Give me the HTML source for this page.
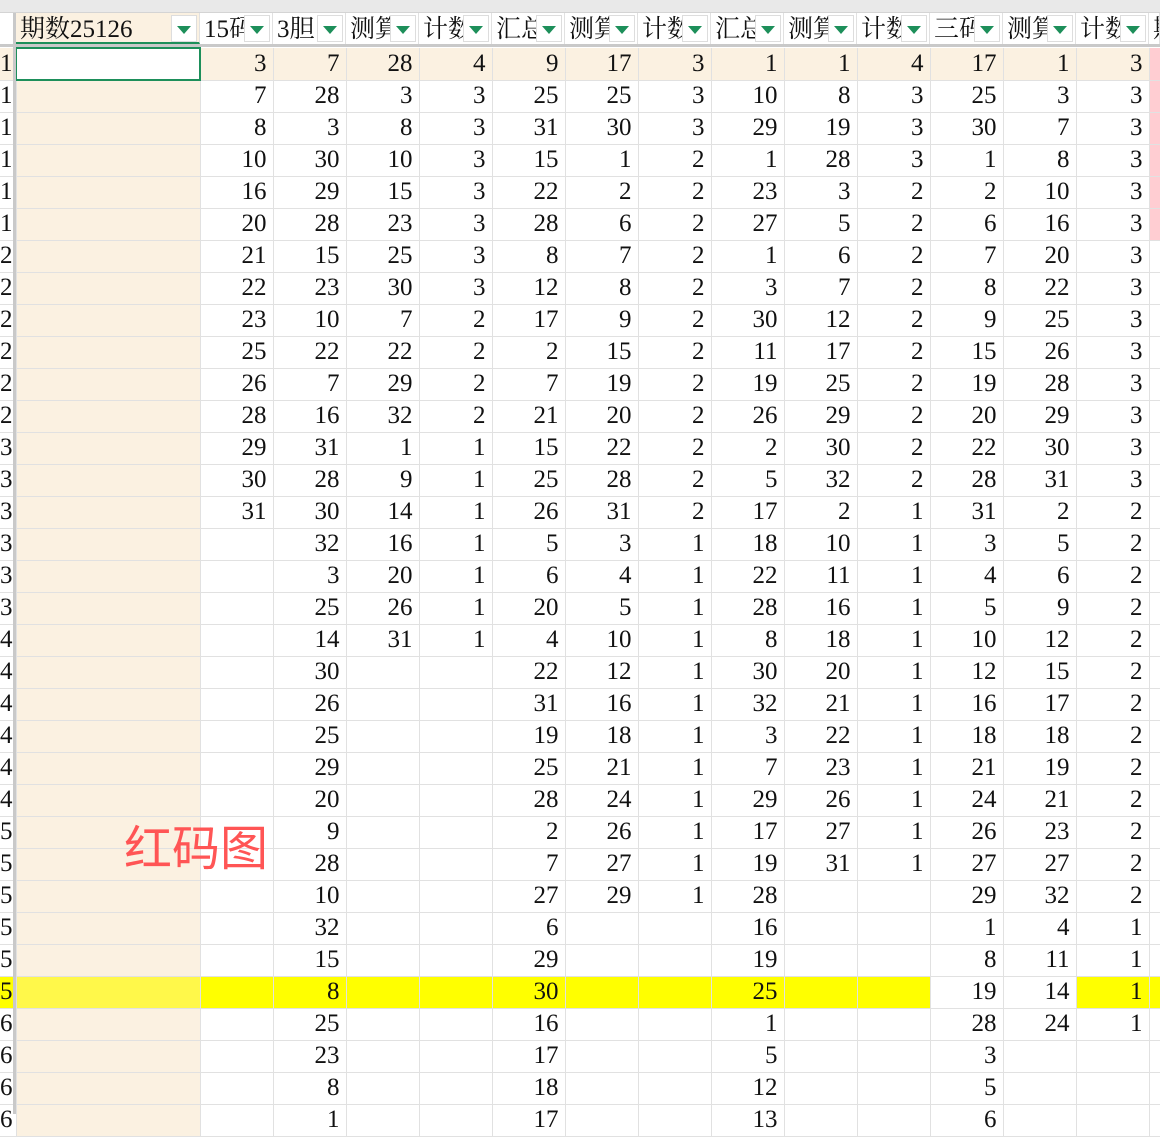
<!DOCTYPE html>
<html><head><meta charset="utf-8"><style>
*{margin:0;padding:0;box-sizing:border-box}
body{width:1160px;height:1114px;overflow:hidden;background:#fff;position:relative;font-family:"Liberation Serif","Noto Serif CJK SC",serif;font-size:24px;color:#111}
#hdr{position:absolute;left:0;top:0;width:1160px;height:13px;background:#e9e9e9;border-bottom:1px solid #d4d4d4}
#flt{position:absolute;left:0;top:13px;height:31px;width:1160px;display:flex;background:#fff}
#flt div{height:31px;border-right:1px solid #e1e1e1;position:relative;overflow:hidden;white-space:nowrap;padding-left:4px;line-height:34px;font-family:"Liberation Serif","Noto Serif CJK SC",serif;font-size:25px}
#flt div i{position:absolute;right:2px;top:2px;width:26px;height:27px;background:#fff;border:1px solid #ddd}
#flt div i:after{content:"";position:absolute;left:5px;top:10px;border-left:7px solid transparent;border-right:7px solid transparent;border-top:8px solid #1d8f5a}
#bar{position:absolute;left:0;top:44px;width:1160px;height:3px;background:#c9c9c9}
#vbar{position:absolute;left:13px;top:13px;width:3px;height:1101px;background:#c9c9c9;z-index:3}
table{position:absolute;left:0;top:47px;border-collapse:collapse;table-layout:fixed;width:1160px}
td{height:32px;border-right:1px solid #e1e1e1;border-bottom:1px solid #e1e1e1;text-align:right;padding-right:6px;overflow:hidden;white-space:nowrap;line-height:30px;font-size:25px}
td:first-child{padding-right:5px}
td:nth-child(2){background:#fbf1e1}
tr.f td{background:#fbf1e1}
tr.f td:nth-child(2){background:#fff;border:2px solid #1d8f5a}
tr.y td{background:#ffff00}
tr.y td:nth-child(2){background:#fff84a}
tr.y td:nth-child(13),tr.y td:nth-child(14){background:#fff}
tr.p td:nth-child(16){background:#ffcdd2}
#red{position:absolute;left:124px;top:814px;font-family:"Noto Sans CJK SC",sans-serif;font-size:48px;color:#ff5555;line-height:60px;z-index:4}
</style></head><body>
<div id="hdr"></div>
<div id="flt">
<div style="width:16px"></div>
<div style="width:184px;background:#fbf1e1;border-bottom:2px solid #1d8f5a">期数25126<i></i></div>
<div style="width:73px">15码<i></i></div>
<div style="width:73px">3胆<i></i></div>
<div style="width:73px">测算<i></i></div>
<div style="width:73px">计数<i></i></div>
<div style="width:73px">汇总<i></i></div>
<div style="width:73px">测算<i></i></div>
<div style="width:73px">计数<i></i></div>
<div style="width:73px">汇总<i></i></div>
<div style="width:73px">测算<i></i></div>
<div style="width:73px">计数<i></i></div>
<div style="width:73px">三码<i></i></div>
<div style="width:73px">测算<i></i></div>
<div style="width:73px">计数<i></i></div>
<div style="width:11px">期</div>
</div>
<div id="bar"></div>
<div id="vbar"></div>
<table>
<colgroup><col style="width:16px"><col style="width:184px"><col span="13" style="width:73px"><col style="width:11px"></colgroup>
<tr class="f p"><td>1</td><td></td><td>3</td><td>7</td><td>28</td><td>4</td><td>9</td><td>17</td><td>3</td><td>1</td><td>1</td><td>4</td><td>17</td><td>1</td><td>3</td><td></td></tr>
<tr class="p"><td>1</td><td></td><td>7</td><td>28</td><td>3</td><td>3</td><td>25</td><td>25</td><td>3</td><td>10</td><td>8</td><td>3</td><td>25</td><td>3</td><td>3</td><td></td></tr>
<tr class="p"><td>1</td><td></td><td>8</td><td>3</td><td>8</td><td>3</td><td>31</td><td>30</td><td>3</td><td>29</td><td>19</td><td>3</td><td>30</td><td>7</td><td>3</td><td></td></tr>
<tr class="p"><td>1</td><td></td><td>10</td><td>30</td><td>10</td><td>3</td><td>15</td><td>1</td><td>2</td><td>1</td><td>28</td><td>3</td><td>1</td><td>8</td><td>3</td><td></td></tr>
<tr class="p"><td>1</td><td></td><td>16</td><td>29</td><td>15</td><td>3</td><td>22</td><td>2</td><td>2</td><td>23</td><td>3</td><td>2</td><td>2</td><td>10</td><td>3</td><td></td></tr>
<tr class="p"><td>1</td><td></td><td>20</td><td>28</td><td>23</td><td>3</td><td>28</td><td>6</td><td>2</td><td>27</td><td>5</td><td>2</td><td>6</td><td>16</td><td>3</td><td></td></tr>
<tr><td>2</td><td></td><td>21</td><td>15</td><td>25</td><td>3</td><td>8</td><td>7</td><td>2</td><td>1</td><td>6</td><td>2</td><td>7</td><td>20</td><td>3</td><td></td></tr>
<tr><td>2</td><td></td><td>22</td><td>23</td><td>30</td><td>3</td><td>12</td><td>8</td><td>2</td><td>3</td><td>7</td><td>2</td><td>8</td><td>22</td><td>3</td><td></td></tr>
<tr><td>2</td><td></td><td>23</td><td>10</td><td>7</td><td>2</td><td>17</td><td>9</td><td>2</td><td>30</td><td>12</td><td>2</td><td>9</td><td>25</td><td>3</td><td></td></tr>
<tr><td>2</td><td></td><td>25</td><td>22</td><td>22</td><td>2</td><td>2</td><td>15</td><td>2</td><td>11</td><td>17</td><td>2</td><td>15</td><td>26</td><td>3</td><td></td></tr>
<tr><td>2</td><td></td><td>26</td><td>7</td><td>29</td><td>2</td><td>7</td><td>19</td><td>2</td><td>19</td><td>25</td><td>2</td><td>19</td><td>28</td><td>3</td><td></td></tr>
<tr><td>2</td><td></td><td>28</td><td>16</td><td>32</td><td>2</td><td>21</td><td>20</td><td>2</td><td>26</td><td>29</td><td>2</td><td>20</td><td>29</td><td>3</td><td></td></tr>
<tr><td>3</td><td></td><td>29</td><td>31</td><td>1</td><td>1</td><td>15</td><td>22</td><td>2</td><td>2</td><td>30</td><td>2</td><td>22</td><td>30</td><td>3</td><td></td></tr>
<tr><td>3</td><td></td><td>30</td><td>28</td><td>9</td><td>1</td><td>25</td><td>28</td><td>2</td><td>5</td><td>32</td><td>2</td><td>28</td><td>31</td><td>3</td><td></td></tr>
<tr><td>3</td><td></td><td>31</td><td>30</td><td>14</td><td>1</td><td>26</td><td>31</td><td>2</td><td>17</td><td>2</td><td>1</td><td>31</td><td>2</td><td>2</td><td></td></tr>
<tr><td>3</td><td></td><td></td><td>32</td><td>16</td><td>1</td><td>5</td><td>3</td><td>1</td><td>18</td><td>10</td><td>1</td><td>3</td><td>5</td><td>2</td><td></td></tr>
<tr><td>3</td><td></td><td></td><td>3</td><td>20</td><td>1</td><td>6</td><td>4</td><td>1</td><td>22</td><td>11</td><td>1</td><td>4</td><td>6</td><td>2</td><td></td></tr>
<tr><td>3</td><td></td><td></td><td>25</td><td>26</td><td>1</td><td>20</td><td>5</td><td>1</td><td>28</td><td>16</td><td>1</td><td>5</td><td>9</td><td>2</td><td></td></tr>
<tr><td>4</td><td></td><td></td><td>14</td><td>31</td><td>1</td><td>4</td><td>10</td><td>1</td><td>8</td><td>18</td><td>1</td><td>10</td><td>12</td><td>2</td><td></td></tr>
<tr><td>4</td><td></td><td></td><td>30</td><td></td><td></td><td>22</td><td>12</td><td>1</td><td>30</td><td>20</td><td>1</td><td>12</td><td>15</td><td>2</td><td></td></tr>
<tr><td>4</td><td></td><td></td><td>26</td><td></td><td></td><td>31</td><td>16</td><td>1</td><td>32</td><td>21</td><td>1</td><td>16</td><td>17</td><td>2</td><td></td></tr>
<tr><td>4</td><td></td><td></td><td>25</td><td></td><td></td><td>19</td><td>18</td><td>1</td><td>3</td><td>22</td><td>1</td><td>18</td><td>18</td><td>2</td><td></td></tr>
<tr><td>4</td><td></td><td></td><td>29</td><td></td><td></td><td>25</td><td>21</td><td>1</td><td>7</td><td>23</td><td>1</td><td>21</td><td>19</td><td>2</td><td></td></tr>
<tr><td>4</td><td></td><td></td><td>20</td><td></td><td></td><td>28</td><td>24</td><td>1</td><td>29</td><td>26</td><td>1</td><td>24</td><td>21</td><td>2</td><td></td></tr>
<tr><td>5</td><td></td><td></td><td>9</td><td></td><td></td><td>2</td><td>26</td><td>1</td><td>17</td><td>27</td><td>1</td><td>26</td><td>23</td><td>2</td><td></td></tr>
<tr><td>5</td><td></td><td></td><td>28</td><td></td><td></td><td>7</td><td>27</td><td>1</td><td>19</td><td>31</td><td>1</td><td>27</td><td>27</td><td>2</td><td></td></tr>
<tr><td>5</td><td></td><td></td><td>10</td><td></td><td></td><td>27</td><td>29</td><td>1</td><td>28</td><td></td><td></td><td>29</td><td>32</td><td>2</td><td></td></tr>
<tr><td>5</td><td></td><td></td><td>32</td><td></td><td></td><td>6</td><td></td><td></td><td>16</td><td></td><td></td><td>1</td><td>4</td><td>1</td><td></td></tr>
<tr><td>5</td><td></td><td></td><td>15</td><td></td><td></td><td>29</td><td></td><td></td><td>19</td><td></td><td></td><td>8</td><td>11</td><td>1</td><td></td></tr>
<tr class="y"><td>5</td><td></td><td></td><td>8</td><td></td><td></td><td>30</td><td></td><td></td><td>25</td><td></td><td></td><td>19</td><td>14</td><td>1</td><td></td></tr>
<tr><td>6</td><td></td><td></td><td>25</td><td></td><td></td><td>16</td><td></td><td></td><td>1</td><td></td><td></td><td>28</td><td>24</td><td>1</td><td></td></tr>
<tr><td>6</td><td></td><td></td><td>23</td><td></td><td></td><td>17</td><td></td><td></td><td>5</td><td></td><td></td><td>3</td><td></td><td></td><td></td></tr>
<tr><td>6</td><td></td><td></td><td>8</td><td></td><td></td><td>18</td><td></td><td></td><td>12</td><td></td><td></td><td>5</td><td></td><td></td><td></td></tr>
<tr><td>6</td><td></td><td></td><td>1</td><td></td><td></td><td>17</td><td></td><td></td><td>13</td><td></td><td></td><td>6</td><td></td><td></td><td></td></tr>
</table>
<div id="red">红码图</div>
</body></html>
